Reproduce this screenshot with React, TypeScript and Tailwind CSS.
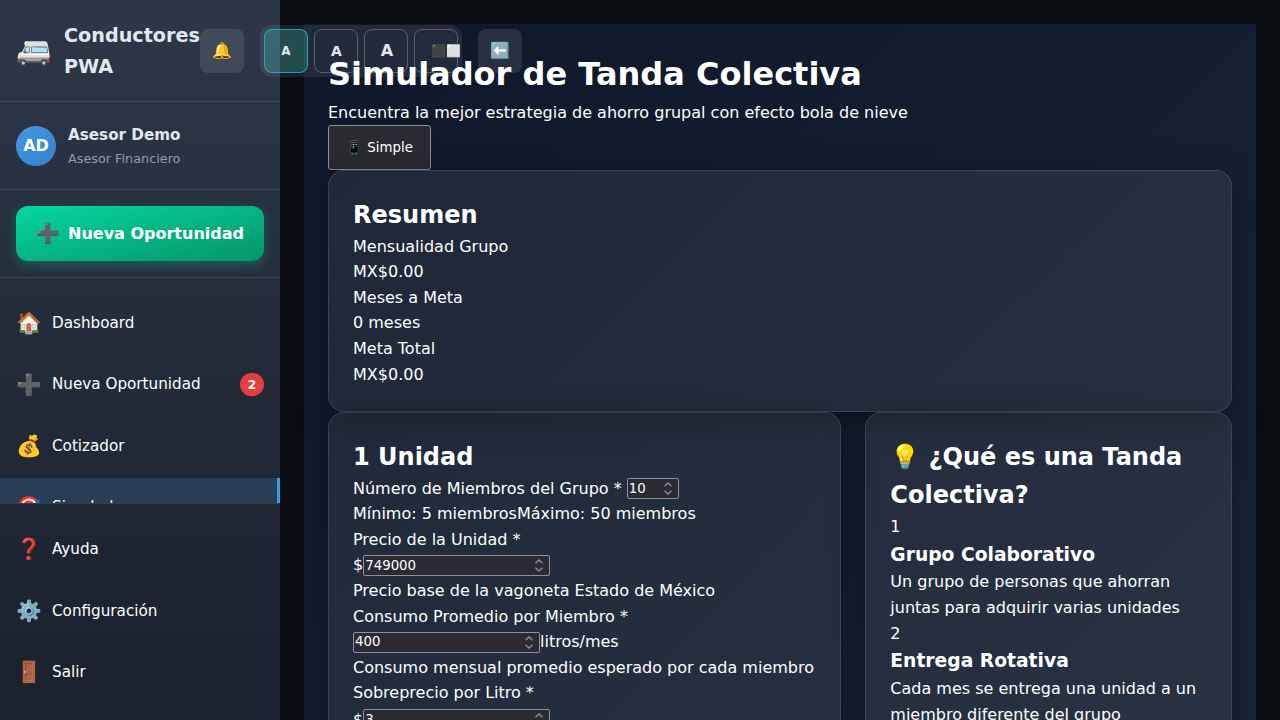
import React from "react";

type NavItem = { icon: string; label: string; badge?: string; active?: boolean };

const mainNav: NavItem[] = [
  { icon: "🏠", label: "Dashboard" },
  { icon: "➕", label: "Nueva Oportunidad", badge: "2" },
  { icon: "💰", label: "Cotizador" },
  { icon: "🎯", label: "Simulador", active: true },
];

const footerNav: NavItem[] = [
  { icon: "❓", label: "Ayuda" },
  { icon: "⚙️", label: "Configuración" },
  { icon: "🚪", label: "Salir" },
];

function NavRow({ icon, label, badge, active }: NavItem) {
  return (
    <a
      className={`flex h-[61.44px] shrink-0 items-center gap-3 px-4 pb-[1.8px] text-[15.2px] text-white ${
        active ? "border-r-3 border-[#4299e1] bg-[#4299e1]/20" : ""
      }`}
    >
      <span className="w-6 pb-[0.6px] text-[20.8px] leading-[22px] whitespace-nowrap">{icon}</span>
      <span className="flex-1">{label}</span>
      {badge && (
        <span className="flex h-[23px] w-6 items-center justify-center rounded-full bg-[#e53e3e] text-xs font-bold">
          {badge}
        </span>
      )}
    </a>
  );
}

function Sidebar() {
  return (
    <aside className="flex h-[720px] w-[280px] shrink-0 flex-col bg-linear-to-b from-[#2d3748] to-[#1a202c]">
      <header className="flex h-[102px] shrink-0 items-center gap-3 border-b border-white/10 px-4">
        <span className="w-9 text-[28.8px] leading-none">🚐</span>
        <span className="w-[136px] pt-px text-[19.2px] leading-[31px] font-bold text-[#e2e8f0]">Conductores PWA</span>
      </header>
      <section className="flex h-[88px] shrink-0 items-center gap-3 border-b border-white/10 px-4">
        <span className="flex size-10 items-center justify-center rounded-full bg-linear-to-br from-[#4299e1] to-[#3182ce] font-bold text-white">
          AD
        </span>
        <div className="pt-[1.5px]">
          <p className="text-[15.2px] leading-[24.3px] font-bold text-[#e2e8f0]">Asesor Demo</p>
          <p className="mt-[2px] text-[12.8px] leading-[20.5px] text-[#8f9cae]">Asesor Financiero</p>
        </div>
      </section>
      <section className="h-[88px] shrink-0 border-b border-white/10 p-4">
        <button className="flex h-[55px] w-full items-center justify-center gap-2 rounded-xl bg-linear-to-br from-[#06d6a0] to-[#059669] font-bold text-white shadow-[0_4px_12px_rgba(6,214,160,0.3)]">
          <span className="w-6 text-[19.2px] leading-5 whitespace-nowrap">➕</span>
          <span>Nueva Oportunidad</span>
        </button>
      </section>
      <nav className="flex min-h-0 flex-1 flex-col overflow-hidden pt-[15.6px]">
        {mainNav.map((item) => (
          <NavRow key={item.label} {...item} />
        ))}
      </nav>
      <nav className="h-[217px] shrink-0 border-t border-white/10 pt-[15.8px]">
        {footerNav.map((item) => (
          <NavRow key={item.label} {...item} />
        ))}
      </nav>
    </aside>
  );
}

const sizeButton = "flex size-11 items-center justify-center rounded-lg border font-bold text-[#e2e8f0]";

function Toolbar() {
  return (
    <div className="absolute top-[25px] left-[200px] z-10 flex items-center gap-4">
      <button className="flex size-11 items-center justify-center rounded-lg bg-white/10 text-base">🔔</button>
      <div className="flex gap-1.5 rounded-xl bg-white/8 p-1">
        <button className={`${sizeButton} border-[#22b8cf]/80 bg-[#38b2ac]/30 text-xs`}>A</button>
        <button className={`${sizeButton} border-white/25 pl-px text-sm`}>A</button>
        <button className={`${sizeButton} border-white/25 pl-[2px] text-base`}>A</button>
        <button className="flex size-11 items-center rounded-lg border border-white/25 pl-4 text-xs whitespace-nowrap">⬛⬜</button>
      </div>
      <button className="flex size-11 items-center justify-center rounded-lg bg-white/10 text-base">⬅️</button>
    </div>
  );
}

function NumberField({ value, short }: { value: string; short?: boolean }) {
  return (
    <span
      className={`inline-flex h-[21px] items-center justify-between rounded-[2px] border border-[#8f8f9d] bg-[#2b2a33] pr-[5px] pl-px align-middle text-[13.333px] leading-none text-white ${
        short ? "w-[52px]" : "w-[187px]"
      }`}
    >
      {value}
      <svg width="10" height="15" viewBox="0 0 10 15" fill="none" stroke="#8f8f9d" strokeWidth="1.3">
        <path d="M1.5 5.3 5 2l3.5 3.3M1.5 9.7 5 13l3.5-3.3" />
      </svg>
    </span>
  );
}

const card =
  "rounded-2xl border border-white/12 bg-white/[0.065] p-6 shadow-[0_8px_32px_rgba(0,0,0,0.4)]";
const h2 = "-mb-[0.5px] pt-[0.5px] text-2xl leading-[38.4px] font-bold";
const h3 = "text-[18.72px] leading-[29.8px] font-bold";

const summary = ["Mensualidad Grupo", "MX$0.00", "Meses a Meta", "0 meses", "Meta Total", "MX$0.00"];

function Simulator() {
  return (
    <div className="relative z-20 px-6 pt-[24.5px] text-base leading-[25.6px] text-white">
      <h1 className="text-[32px] leading-[51.2px] font-bold">Simulador de Tanda Colectiva</h1>
      <p>Encuentra la mejor estrategia de ahorro grupal con efecto bola de nieve</p>
      <button className="flex h-[45px] w-[103px] items-center justify-center rounded-[3px] border border-[#8f8f9d] bg-[#2b2a33] text-[13.333px] whitespace-pre">
        📱 Simple
      </button>
      <section className={card}>
        <h2 className={h2}>Resumen</h2>
        {summary.map((line, i) => (
          <p key={i}>{line}</p>
        ))}
      </section>
      <div className="grid grid-cols-[1.4fr_1fr] gap-6">
        <section className={card}>
          <h2 className={h2}>1 Unidad</h2>
          <div className="flex h-[25.6px] items-center gap-[5px]">
            <span>Número de Miembros del Grupo *</span>
            <NumberField value="10" short />
          </div>
          <p>Mínimo: 5 miembrosMáximo: 50 miembros</p>
          <p>Precio de la Unidad *</p>
          <div className="flex h-[25.6px] items-center">
            <span>$</span>
            <NumberField value="749000" />
          </div>
          <p>Precio base de la vagoneta Estado de México</p>
          <p>Consumo Promedio por Miembro *</p>
          <div className="flex h-[25.6px] items-center">
            <NumberField value="400" />
            <span>litros/mes</span>
          </div>
          <p>Consumo mensual promedio esperado por cada miembro</p>
          <p>Sobreprecio por Litro *</p>
          <div className="flex h-[26.6px] items-center">
            <span>$</span>
            <NumberField value="3" />
          </div>
          <p>Sobreprecio por litro para el ahorro</p>
        </section>
        <section className={card}>
          <h2 className={h2}>💡 ¿Qué es una Tanda Colectiva?</h2>
          <p>1</p>
          <h3 className={h3}>Grupo Colaborativo</h3>
          <p>Un grupo de personas que ahorran juntas para adquirir varias unidades</p>
          <p>2</p>
          <h3 className={h3}>Entrega Rotativa</h3>
          <p>Cada mes se entrega una unidad a un miembro diferente del grupo</p>
        </section>
      </div>
    </div>
  );
}

export default function App() {
  return (
    <div className="relative flex h-[720px] w-full overflow-hidden bg-[#0a0e12] font-['DejaVu_Sans',sans-serif]">
      <Sidebar />
      <Toolbar />
      <main className="h-[720px] min-w-0 flex-1 overflow-hidden p-6 pb-0">
        <div className="h-[1400px] bg-linear-[135deg] from-[#0f172a] to-[#1e293b]">
          <Simulator />
        </div>
      </main>
    </div>
  );
}
